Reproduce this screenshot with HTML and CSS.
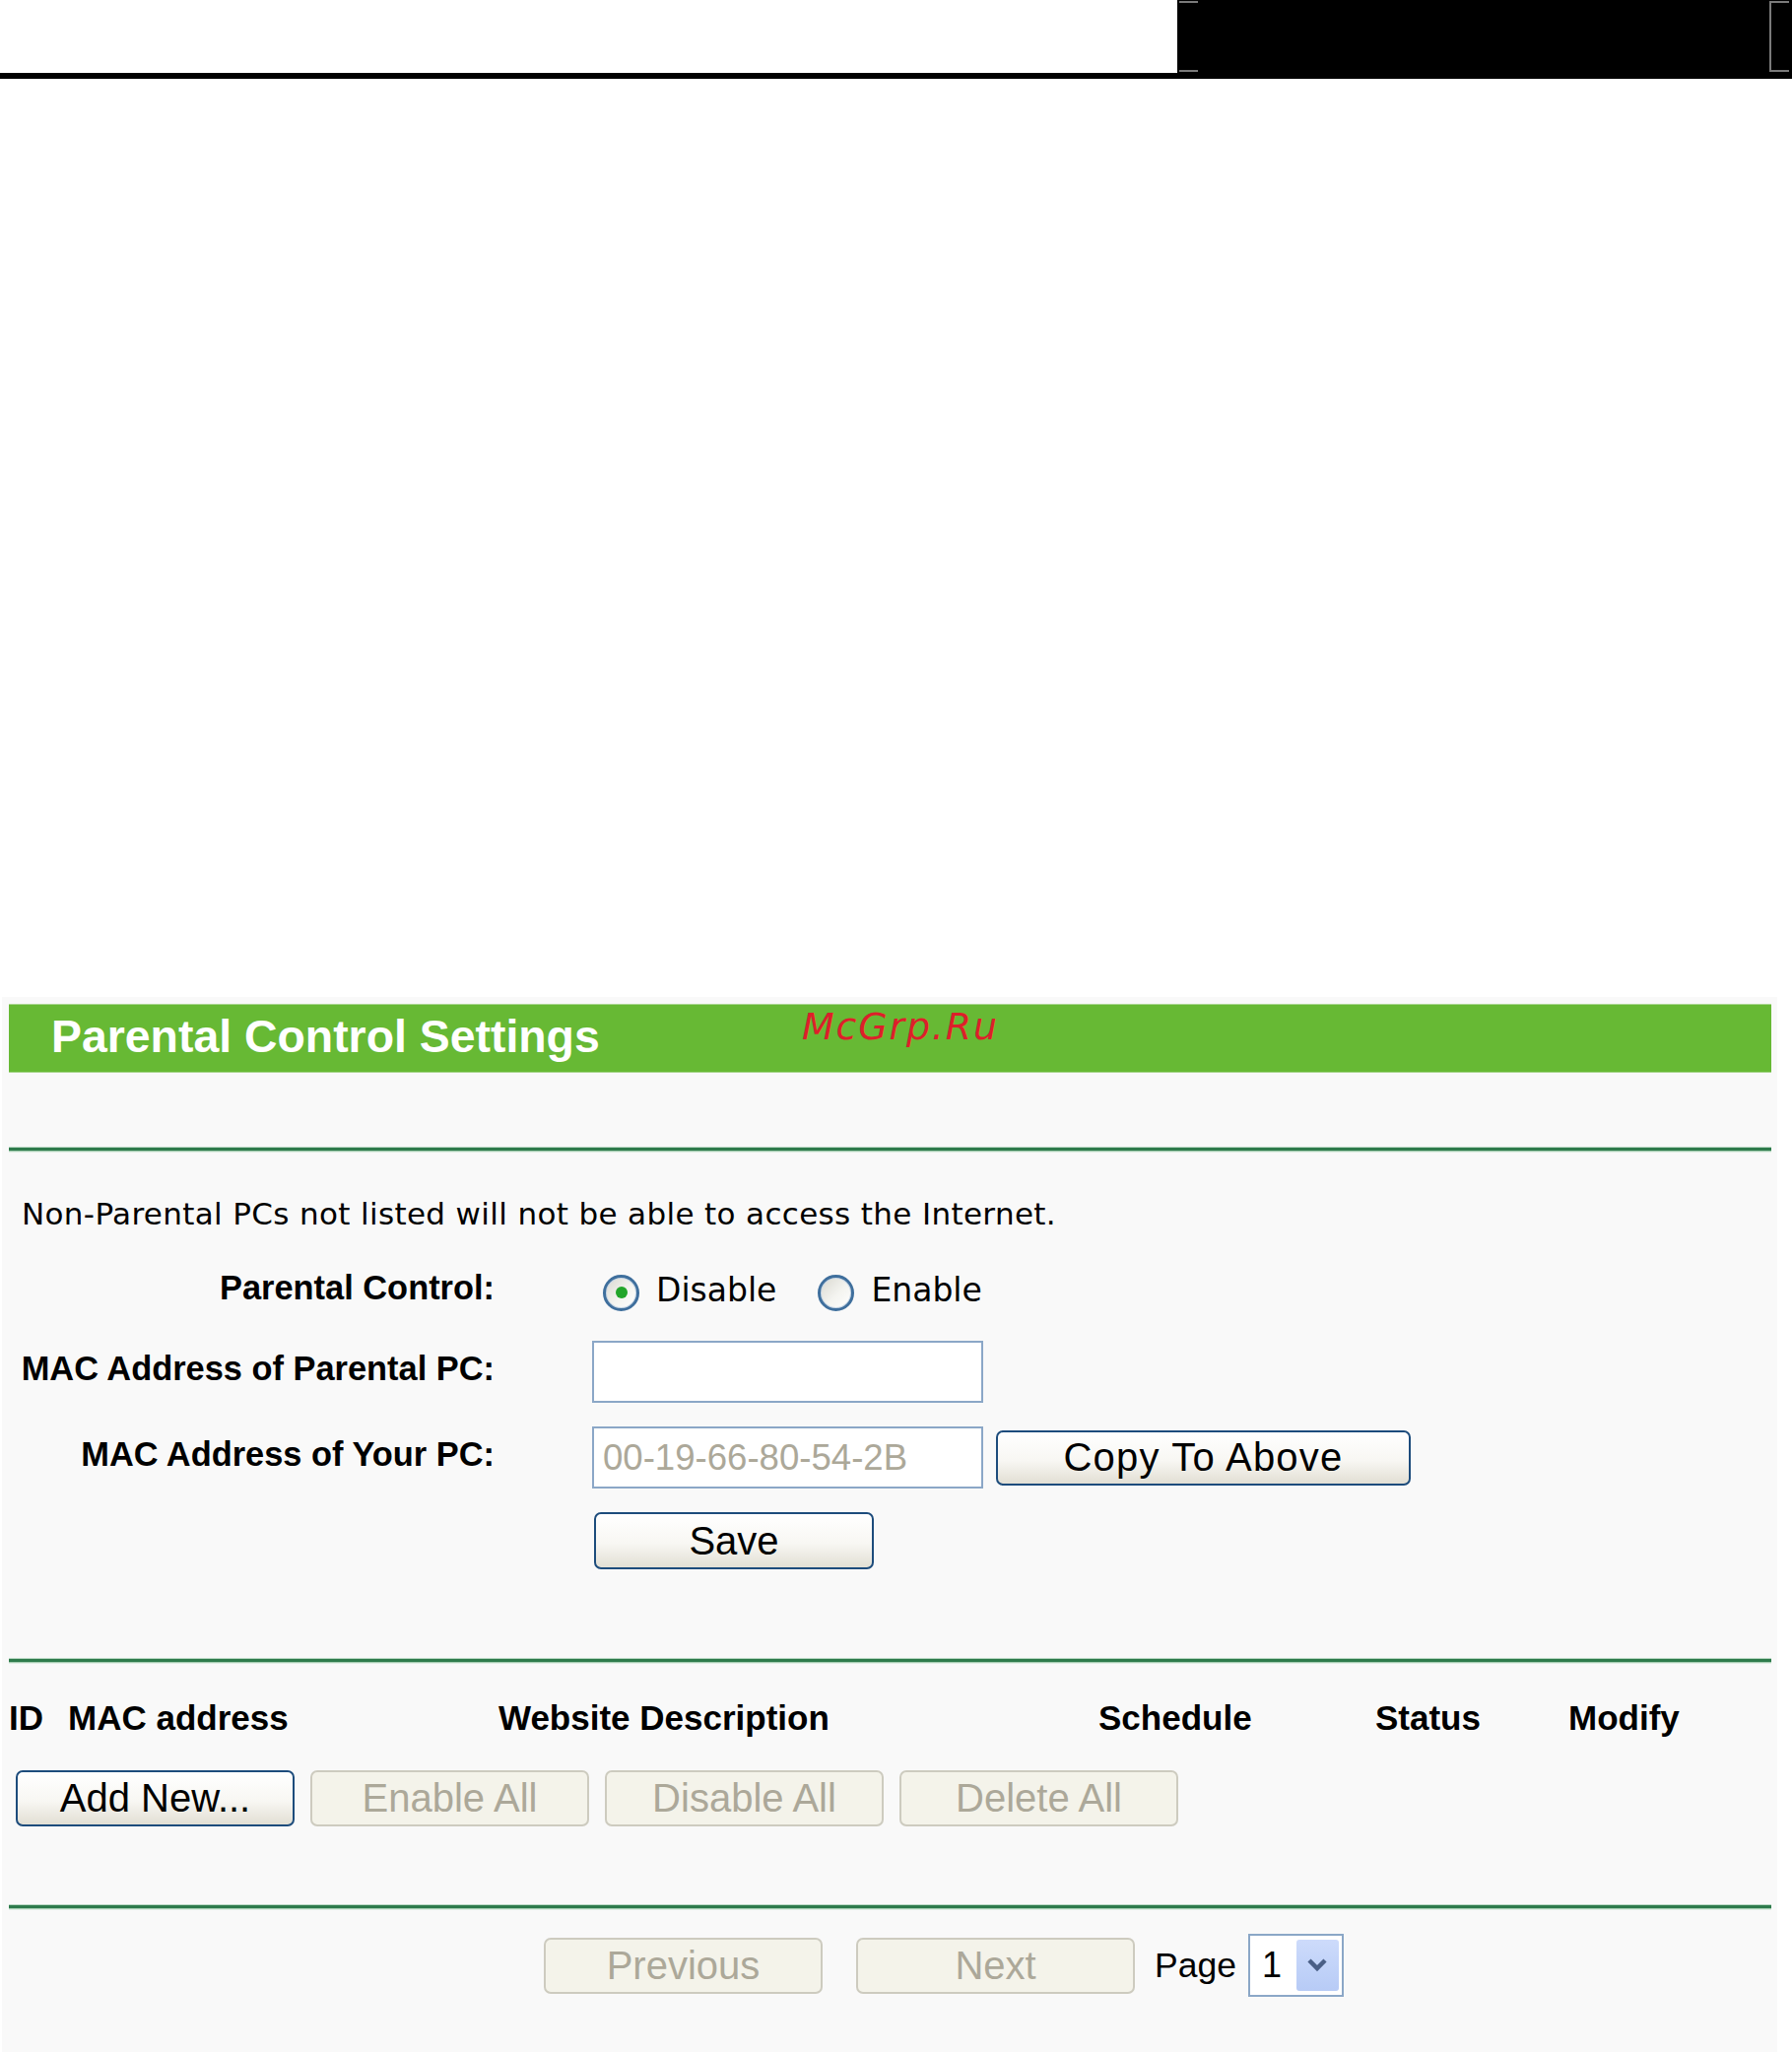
FILE: index.html
```html
<!DOCTYPE html>
<html lang="en">
  <head>
    <meta charset="UTF-8" />
    <title>Parental Control Settings</title>
    <link rel="stylesheet" href="styles.css">
  </head>
  <body>
    <div class="top-bar">
      <div class="top-black">
        <span class="mark-left"></span>
        <span class="mark-right"></span>
      </div>
    </div>

    <div class="panel">
      <div class="title-bar">
        <h1 class="title-text">Parental Control Settings</h1>
        <span class="watermark">McGrp.Ru</span>
      </div>

      <div class="rule rule-top"></div>

      <p class="note">Non-Parental PCs not listed will not be able to access the Internet.</p>

      <form class="settings">
        <div class="form-row row-radio">
          <span class="row-label">Parental Control:</span>
          <div class="row-field">
            <label class="radio radio-first">
              <span class="radio-mark"><span class="radio-dot"></span></span>
              <span class="radio-text">Disable</span>
            </label>
            <label class="radio radio-second">
              <span class="radio-mark"></span>
              <span class="radio-text">Enable</span>
            </label>
          </div>
        </div>

        <div class="form-row row-input">
          <span class="row-label">MAC Address of Parental PC:</span>
          <div class="row-field">
            <input type="text" class="text-input" />
          </div>
        </div>

        <div class="form-row row-input row-gap">
          <span class="row-label">MAC Address of Your PC:</span>
          <div class="row-field">
            <input type="text" class="text-input text-input-off" value="00-19-66-80-54-2B" readonly />
            <button type="button" class="xp-button copy-button">Copy To Above</button>
          </div>
        </div>

        <div class="form-row row-save">
          <span class="row-label"></span>
          <div class="row-field">
            <button type="submit" class="xp-button save-button">Save</button>
          </div>
        </div>
      </form>

      <div class="rule rule-mid"></div>

      <div class="list-head">
        <span>ID</span>
        <span>MAC address</span>
        <span>Website Description</span>
        <span>Schedule</span>
        <span>Status</span>
        <span>Modify</span>
      </div>

      <div class="list-buttons">
        <button type="button" class="xp-button list-button">Add New...</button>
        <button type="button" class="xp-button list-button xp-off">Enable All</button>
        <button type="button" class="xp-button list-button xp-off">Disable All</button>
        <button type="button" class="xp-button list-button xp-off">Delete All</button>
      </div>

      <div class="rule rule-bottom"></div>

      <div class="pager">
        <button type="button" class="xp-button list-button xp-off">Previous</button>
        <button type="button" class="xp-button list-button xp-off next-button">Next</button>
        <span class="page-label">Page</span>
        <div class="page-select">
          <span class="page-value">1</span>
          <span class="page-arrow">
            <svg width="22" height="16" viewBox="0 0 22 16">
              <path d="M3 3 L11 11 L19 3" fill="none" stroke="#4a5f86" stroke-width="4.5" />
            </svg>
          </span>
        </div>
      </div>
    </div>
  </body>
</html>
```

FILE: styles.css
```css
body {
  margin: 0;
  background-color: #ffffff;
  font-family: "Liberation Sans", Arial, sans-serif;
  color: #000000;
}

/* barre noire du haut */
.top-bar {
  display: flex;
  justify-content: flex-end;
  height: 74px;
  border-bottom: 6px solid #000000;
}

.top-black {
  position: relative;
  width: 624px;
  background-color: #000000;
}

.mark-left {
  position: absolute;
  left: 2px;
  top: 1px;
  width: 19px;
  height: 72px;
  box-sizing: border-box;
  border-top: 2px solid #7a7a7a;
  border-bottom: 2px solid #7a7a7a;
}

.mark-right {
  position: absolute;
  right: 3px;
  top: 1px;
  width: 20px;
  height: 72px;
  box-sizing: border-box;
  border: 2px solid #7a7a7a;
  border-right: none;
}

.panel {
  position: relative;
  box-sizing: border-box;
  width: 1802px;
  min-height: 1071px;
  margin: 932px 0 0 2px;
  padding: 7px 6px 0 7px;
  background-color: #f9f9f9;
}

.title-bar {
  position: relative;
  height: 68px;
  padding-left: 43px;
  border-top: 1px solid #a9d68e;
  border-bottom: 1px solid #a9d68e;
  background-color: #67b934;
}

.title-text {
  margin: 0;
  font-size: 46.4px;
  font-weight: bold;
  line-height: 64px;
  color: #ffffff;
}

.watermark {
  position: absolute;
  left: 805px;
  top: 3px;
  font-family: "DejaVu Sans", Verdana, sans-serif;
  font-style: italic;
  font-size: 38px;
  line-height: 38px;
  letter-spacing: 1.8px;
  color: #dd1f2a;
}

.rule {
  height: 3px;
  background-color: #2e7b4c;
  box-shadow: 0 -1px 0 #b9d8c3, 0 1px 0 #a6cdb2, 0 2px 0 #e0eee5;
}

.rule-top {
  margin-top: 76px;
}

.note {
  margin: 46px 0 0;
  padding-left: 13px;
  font-family: "DejaVu Sans", Verdana, sans-serif;
  font-size: 31px;
  line-height: 36px;
  letter-spacing: 0.35px;
}

.settings {
  margin: 38px 0 0;
}

.form-row {
  display: flex;
  align-items: center;
}

.row-label {
  width: 493px;
  text-align: right;
  font-size: 34.4px;
  font-weight: bold;
  line-height: 34px;
}

.row-field {
  display: flex;
  align-items: center;
  margin-left: 99px;
}

.row-radio {
  height: 48px;
}

.row-radio .row-label {
  padding-bottom: 10px;
}

.row-input {
  height: 63px;
  margin-top: 25px;
}

.row-input .row-label {
  padding-bottom: 8px;
}

.row-gap {
  margin-top: 24px;
}

.row-save {
  height: 58px;
  margin-top: 24px;
}

.radio {
  display: flex;
  align-items: center;
  font-family: "DejaVu Sans", Verdana, sans-serif;
  font-size: 33px;
  line-height: 36px;
}

.radio-first {
  margin-left: 11px;
}

.radio-second {
  margin-left: 42px;
}

.radio-mark {
  display: flex;
  justify-content: center;
  align-items: center;
  box-sizing: border-box;
  width: 37px;
  height: 37px;
  border: 3px solid #3f6f9d;
  border-radius: 50%;
  background: linear-gradient(135deg, #d9d8d0 0%, #f4f4f0 55%, #ffffff 100%);
  box-shadow: inset 0 0 0 1px #c8d7e6;
}

.radio-dot {
  width: 12px;
  height: 12px;
  border-radius: 50%;
  background-color: #22a52a;
}

.radio-text {
  margin-left: 17px;
  padding-bottom: 5px;
}

.text-input {
  box-sizing: border-box;
  width: 397px;
  height: 63px;
  padding: 0 9px;
  border: 2px solid #8ba7c7;
  background-color: #ffffff;
  font-family: "Liberation Sans", Arial, sans-serif;
  font-size: 36.6px;
  color: #000000;
  outline: none;
}

.text-input-off {
  color: #aca899;
}

.xp-button {
  box-sizing: border-box;
  height: 56px;
  padding: 0;
  border: 2px solid #1d4c7c;
  border-radius: 7px;
  background: linear-gradient(#ffffff 0%, #f8f7f3 55%, #e2dfd4 100%);
  font-family: "Liberation Sans", Arial, sans-serif;
  font-size: 40px;
  color: #000000;
  cursor: pointer;
}

.copy-button {
  width: 421px;
  margin-left: 13px;
  letter-spacing: 1.2px;
}

.save-button {
  width: 284px;
  height: 58px;
  margin-left: 2px;
}

.rule-mid {
  margin-top: 91px;
}

.list-head {
  display: grid;
  grid-template-columns: 60px 437px 609px 281px 196px auto;
  margin-top: 40px;
  font-size: 35px;
  font-weight: bold;
  line-height: 34px;
}

.list-buttons {
  display: flex;
  gap: 16px;
  margin-top: 36px;
  padding-left: 7px;
}

.list-button {
  width: 283px;
  height: 57px;
}

.xp-off {
  border-color: #cdcbbf;
  background: #f4f3ea;
  color: #aca899;
  cursor: default;
}

.rule-bottom {
  margin-top: 80px;
}

.pager {
  display: flex;
  align-items: center;
  height: 64px;
  margin-top: 26px;
  padding-left: 543px;
}

.next-button {
  margin-left: 34px;
}

.page-label {
  margin-left: 20px;
  font-size: 35.5px;
}

.page-select {
  display: flex;
  justify-content: space-between;
  align-items: center;
  box-sizing: border-box;
  width: 97px;
  height: 64px;
  margin-left: 12px;
  padding: 3px 3px 3px 12px;
  border: 2px solid #8ba7c7;
  background-color: #ffffff;
  font-size: 36px;
}

.page-arrow {
  display: flex;
  justify-content: center;
  align-items: center;
  width: 43px;
  height: 52px;
  border-radius: 3px;
  background: linear-gradient(#cddbfb, #b7cbf6);
}
```
